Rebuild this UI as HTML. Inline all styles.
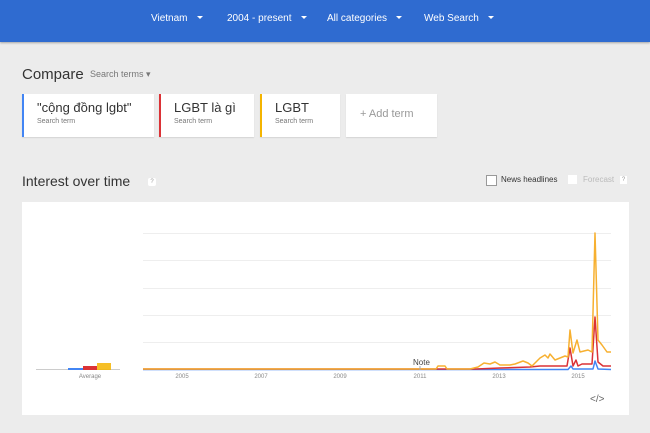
<!DOCTYPE html>
<html><head><meta charset="utf-8"><style>
body{margin:0;width:650px;height:433px;background:#ececec;font-family:"Liberation Sans",sans-serif;overflow:hidden;position:relative}
.top{position:absolute;left:0;top:0;width:650px;height:42px;background:#2f6bd0;box-shadow:0 1px 2px rgba(0,0,0,.3)}
.top span{position:absolute;top:13px;color:#fff;font-size:10px}
.top span:after{content:"";display:inline-block;margin-left:9px;border-left:3px solid transparent;border-right:3px solid transparent;border-top:3px solid #fff;vertical-align:2px}
.t{position:absolute}
.card{position:absolute;top:94px;height:43px;background:#fff;box-shadow:0 1px 1px rgba(0,0,0,.1)}
.card b{position:absolute;left:13px;top:6px;font-weight:normal;font-size:13px;color:#333}
.card i{position:absolute;left:13px;top:24px;font-style:normal;font-size:7px;color:#777}
.yr{position:absolute;top:374px;font-size:6px;color:#888;transform:translateX(-50%)}
</style></head><body>
<div class="top">
<span style="left:151px">Vietnam</span>
<span style="left:227px">2004 - present</span>
<span style="left:327px">All categories</span>
<span style="left:424px">Web Search</span>
</div>
<div class="t" style="left:22px;top:66px;font-size:15px;color:#333">Compare</div>
<div class="t" style="left:90px;top:69px;font-size:9px;color:#777">Search terms ▾</div>
<div class="card" style="left:22px;width:130px;border-left:2px solid #4285f4"><b>"cộng đồng lgbt"</b><i>Search term</i></div>
<div class="card" style="left:159px;width:93px;border-left:2px solid #db3236"><b>LGBT là gì</b><i>Search term</i></div>
<div class="card" style="left:260px;width:78px;border-left:2px solid #f4b400"><b>LGBT</b><i>Search term</i></div>
<div class="card" style="left:346px;width:91px"><b style="left:14px;top:14px;font-size:11px;color:#999">+ Add term</b></div>
<div class="t" style="left:22px;top:173px;font-size:14px;color:#333">Interest over time</div>
<div class="t" style="left:148px;top:178px;width:8px;height:8px;background:#fff;border-radius:2px;font-size:6px;color:#999;text-align:center;line-height:8px">?</div>
<div class="t" style="left:486px;top:175px;width:9px;height:9px;border:1px solid #999;background:#fff"></div>
<div class="t" style="left:501px;top:175px;font-size:8px;color:#333">News headlines</div>
<div class="t" style="left:568px;top:175px;width:9px;height:9px;background:#fff"></div>
<div class="t" style="left:583px;top:175px;font-size:8px;color:#bbb">Forecast</div>
<div class="t" style="left:620px;top:176px;width:7px;height:8px;background:#fff;font-size:6px;color:#999;text-align:center;line-height:8px">?</div>
<div class="t" style="left:22px;top:202px;width:607px;height:213px;background:#fff"></div>
<svg class="t" style="left:0;top:0" width="650" height="433">
<g stroke="#eee" stroke-width="1">
<line x1="143" y1="233.5" x2="611" y2="233.5"/><line x1="143" y1="260.5" x2="611" y2="260.5"/><line x1="143" y1="288.5" x2="611" y2="288.5"/><line x1="143" y1="315.5" x2="611" y2="315.5"/><line x1="143" y1="342.5" x2="611" y2="342.5"/>
</g>
<line x1="36" y1="369.5" x2="120" y2="369.5" stroke="#ccc"/>
<rect x="68" y="368" width="15" height="2" fill="#4285f4"/>
<rect x="83" y="366" width="14" height="4" fill="#db3236"/>
<rect x="97" y="363" width="14" height="7" fill="#f4b400" opacity=".85"/>
<g fill="none" stroke-width="1.5" stroke-linejoin="round">
<polyline stroke="#4285f4" points="143,369.5 568,369.5 571,366 573,369 593,369 595,361 598,369 611,369.5"/>
<polyline stroke="#db3236" points="143,369 476,369 500,368 530,367 540,366 550,366 567,366 570,348 573,366 576,360 578,366 582,364 592,364 595,317 598,362 603,366 611,366"/>
<polyline stroke="#f7b030" points="143,369 436,369 438,366 445,366 447,369 470,369 478,367 484,363 490,364 495,362 500,365 510,365 515,364 523,361 528,363 532,366 537,361 540,358 545,355 548,358 550,354 555,360 560,358 565,356 568,357 570,330 573,353 577,340 580,352 588,350 592,352 595,233 598,340 602,345 607,352 611,352"/>
</g>
<line x1="420" y1="366" x2="420" y2="370" stroke="#aaa"/>
<text x="413" y="365" font-size="8" fill="#444" font-family="Liberation Sans">Note</text>
<text x="590" y="402" font-size="10" fill="#666" font-family="Liberation Sans">&lt;/&gt;</text>
</svg>
<div class="yr" style="left:90px">Average</div>
<div class="yr" style="left:182px">2005</div>
<div class="yr" style="left:261px">2007</div>
<div class="yr" style="left:340px">2009</div>
<div class="yr" style="left:420px">2011</div>
<div class="yr" style="left:499px">2013</div>
<div class="yr" style="left:578px">2015</div>
</body></html>
